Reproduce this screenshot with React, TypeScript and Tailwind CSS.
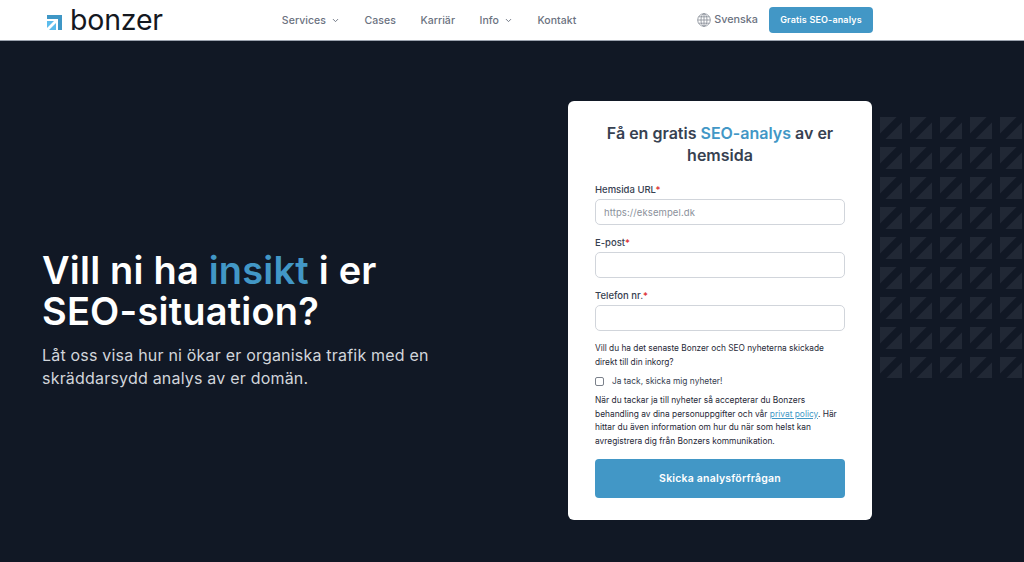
import { ChevronDown } from "lucide-react";

const font = "font-['Inter',sans-serif]";

const Logo = () => (
  <div className="flex items-center gap-[8px]">
    <svg width="15" height="15" viewBox="0 0 15 15" className="mt-[5px]">
      <path d="M0 0H15V15H11V4H0Z" fill="#3f97c6" />
      <path d="M0 6H7L0 13Z" fill="#5cbcec" />
      <path d="M2 15L9 8V15Z" fill="#5cbcec" />
    </svg>
    <span className="font-['Inter',sans-serif] text-[28.5px] leading-none tracking-[-0.2px] text-[#14181f]">
      bonzer
    </span>
  </div>
);

const Field = ({
  label,
  placeholder,
}: {
  label: string;
  placeholder?: string;
}) => (
  <div className="flex flex-col gap-[3px]">
    <label className="text-[9.5px] leading-[12px] font-medium text-[#374151]">
      {label}
      <span className="text-[#dc2626]">*</span>
    </label>
    <input
      placeholder={placeholder}
      className="h-[26px] w-full rounded-[5px] border border-[#d1d5db] bg-white px-[8px] text-[9.5px] tracking-[0.1px] placeholder:text-[#8b919b]"
    />
  </div>
);

// decorative squares to the right of the form
const Pattern = () => (
  <svg
    width="144"
    height="261"
    className="absolute left-[880px] top-[76px]"
    viewBox="0 0 144 261"
  >
    <defs>
      <pattern id="tile" width="30" height="30" patternUnits="userSpaceOnUse">
        <path d="M0 0H16.5L0 16.5Z" fill="#212835" />
        <path d="M22 5.5V22H5.5Z" fill="#212835" />
      </pattern>
    </defs>
    <rect width="144" height="261" fill="url(#tile)" />
  </svg>
);

export default function App() {
  return (
    <div className={`${font} h-[562px] w-[1024px] overflow-hidden bg-[#111825]`}>
      {/* Header */}
      <header className="flex h-[41px] items-center border-b border-[#9ca3af] bg-white pl-[47px] pr-[151px]">
        <Logo />
        <nav className="ml-[119px] flex items-center gap-[24.5px] pt-[1px] text-[10.5px] font-medium tracking-[0.05px] text-[#6b7280]">
          <span className="flex items-center gap-[5px]">
            Services <ChevronDown size={9} strokeWidth={2.5} />
          </span>
          <span>Cases</span>
          <span>Karriär</span>
          <span className="flex items-center gap-[5px]">
            Info <ChevronDown size={9} strokeWidth={2.5} />
          </span>
          <span>Kontakt</span>
        </nav>
        <div className="ml-auto flex items-center gap-[11px]">
          <span className="flex items-center gap-[3px] text-[10.8px] font-medium text-[#6b7280]">
            <svg width="14" height="14" viewBox="0 0 14 14" fill="none" stroke="#858b95" strokeWidth="0.8">
              <circle cx="7" cy="7" r="6.3" />
              <ellipse cx="7" cy="7" rx="3" ry="6.3" />
              <path d="M7 .7V13.3M.7 7H13.3M1.6 3.8H12.4M1.6 10.2H12.4" />
            </svg>
            Svenska
          </span>
          <button className="h-[26px] w-[104px] rounded-[4px] bg-[#4297c6] text-[9px] font-semibold tracking-[0.15px] text-white">
            Gratis SEO-analys
          </button>
        </div>
      </header>

      {/* Hero */}
      <main className="relative flex h-[521px] items-start justify-between pl-[42px] pr-[152px] pt-[60px]">
        <Pattern />
        <div className="mt-[149px]">
          <h1 className="text-[38px] leading-[41px] font-semibold tracking-[0.2px] text-white">
            Vill ni ha <span className="text-[#4297c6]">insikt</span> i er
            <br />
            SEO-situation?
          </h1>
          <p className="mt-[12px] text-[16px] leading-[23px] tracking-[0.2px] text-[#d1d5db]">
            Låt oss visa hur ni ökar er organiska trafik med en
            <br />
            skräddarsydd analys av er domän.
          </p>
        </div>

        {/* Form */}
        <form className="relative h-[419px] w-[304px] rounded-[6px] bg-white px-[27px] pt-[21px]">
          <h2 className="text-center text-[16px] leading-[22px] font-semibold text-[#374151]">
            Få en gratis <span className="text-[#4297c6]">SEO-analys</span> av er hemsida
          </h2>
          <div className="mt-[18px] flex flex-col gap-[12px]">
            <Field label="Hemsida URL" placeholder="https://eksempel.dk" />
            <Field label="E-post" />
            <Field label="Telefon nr." />
          </div>
          <p className="mt-[10px] text-[8.3px] leading-[14px] text-[#1f2937]">
            Vill du ha det senaste Bonzer och SEO nyheterna skickade direkt till din inkorg?
          </p>
          <label className="mt-[5px] flex items-center gap-[8px] text-[8.4px] leading-[14px] text-[#374151]">
            <span className="h-[9px] w-[9px] rounded-[2px] border border-[#7b818b]" />
            Ja tack, skicka mig nyheter!
          </label>
          <p className="mt-[6px] text-[8.4px] leading-[13.6px] text-[#1f2937]">
            När du tackar ja till nyheter så accepterar du Bonzers behandling av dina personuppgifter och vår{" "}
            <a className="text-[#4297c6] underline">privat policy</a>. Här hittar du även information om hur du när som helst kan avregistrera dig från Bonzers kommunikation.
          </p>
          <button
            type="button"
            className="mt-[11px] h-[39px] w-full rounded-[4px] bg-[#4297c6] text-[10.5px] font-semibold tracking-[0.2px] text-white"
          >
            Skicka analysförfrågan
          </button>
        </form>
      </main>
    </div>
  );
}
